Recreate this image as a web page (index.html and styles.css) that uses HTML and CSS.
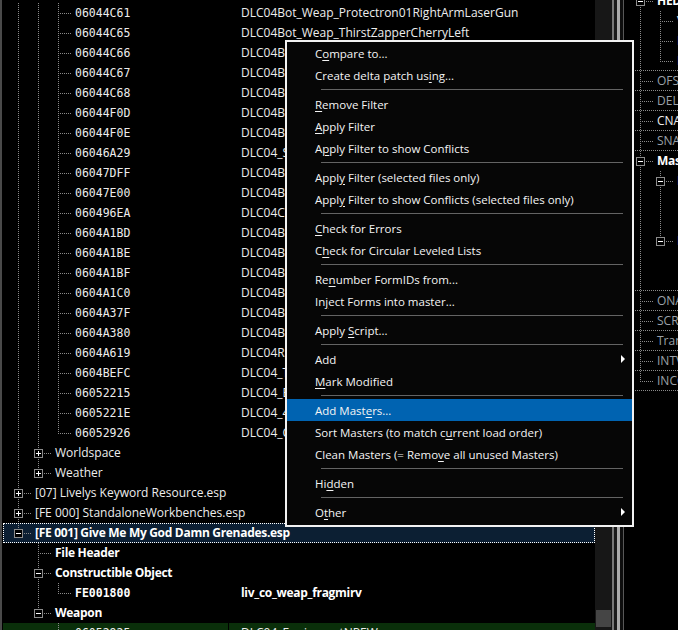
FILE: index.html
```html
<!DOCTYPE html>
<html>
<head>
<meta charset="utf-8">
<link rel="stylesheet" href="styles.css">
</head>
<body>
<div class="app">
  <div class="left">
    <div class="tree">
      <div class="row"><div class="tc"><span class="c v"></span><span class="c v"></span><span class="o mid"></span><span class="lbl mono">06044C61</span></div><div class="nc">DLC04Bot_Weap_Protectron01RightArmLaserGun</div></div>
      <div class="row"><div class="tc"><span class="c v"></span><span class="c v"></span><span class="o mid"></span><span class="lbl mono">06044C65</span></div><div class="nc">DLC04Bot_Weap_ThirstZapperCherryLeft</div></div>
      <div class="row"><div class="tc"><span class="c v"></span><span class="c v"></span><span class="o mid"></span><span class="lbl mono">06044C66</span></div><div class="nc">DLC04Bot_Weap_ThirstZapperCherryRight</div></div>
      <div class="row"><div class="tc"><span class="c v"></span><span class="c v"></span><span class="o mid"></span><span class="lbl mono">06044C67</span></div><div class="nc">DLC04Bot_Weap_ThirstZapperNukaLeft</div></div>
      <div class="row"><div class="tc"><span class="c v"></span><span class="c v"></span><span class="o mid"></span><span class="lbl mono">06044C68</span></div><div class="nc">DLC04Bot_Weap_ThirstZapperNukaRight</div></div>
      <div class="row"><div class="tc"><span class="c v"></span><span class="c v"></span><span class="o mid"></span><span class="lbl mono">06044F0D</span></div><div class="nc">DLC04Bot_Weap_Protectron01LeftArmLaserGun</div></div>
      <div class="row"><div class="tc"><span class="c v"></span><span class="c v"></span><span class="o mid"></span><span class="lbl mono">06044F0E</span></div><div class="nc">DLC04Bot_Weap_Protectron01LeftArmLaserGunB</div></div>
      <div class="row"><div class="tc"><span class="c v"></span><span class="c v"></span><span class="o mid"></span><span class="lbl mono">06046A29</span></div><div class="nc">DLC04_SpearJeweled</div></div>
      <div class="row"><div class="tc"><span class="c v"></span><span class="c v"></span><span class="o mid"></span><span class="lbl mono">06047DFF</span></div><div class="nc">DLC04Bot_Weap_AssaultronHead</div></div>
      <div class="row"><div class="tc"><span class="c v"></span><span class="c v"></span><span class="o mid"></span><span class="lbl mono">06047E00</span></div><div class="nc">DLC04Bot_Weap_AssaultronHeadLaser</div></div>
      <div class="row"><div class="tc"><span class="c v"></span><span class="c v"></span><span class="o mid"></span><span class="lbl mono">060496EA</span></div><div class="nc">DLC04Cowboy_Weap_Revolver</div></div>
      <div class="row"><div class="tc"><span class="c v"></span><span class="c v"></span><span class="o mid"></span><span class="lbl mono">0604A1BD</span></div><div class="nc">DLC04Bot_Weap_SentryMinigunLeft</div></div>
      <div class="row"><div class="tc"><span class="c v"></span><span class="c v"></span><span class="o mid"></span><span class="lbl mono">0604A1BE</span></div><div class="nc">DLC04Bot_Weap_SentryMinigunRight</div></div>
      <div class="row"><div class="tc"><span class="c v"></span><span class="c v"></span><span class="o mid"></span><span class="lbl mono">0604A1BF</span></div><div class="nc">DLC04Bot_Weap_SentryRocketLeft</div></div>
      <div class="row"><div class="tc"><span class="c v"></span><span class="c v"></span><span class="o mid"></span><span class="lbl mono">0604A1C0</span></div><div class="nc">DLC04Bot_Weap_SentryRocketRight</div></div>
      <div class="row"><div class="tc"><span class="c v"></span><span class="c v"></span><span class="o mid"></span><span class="lbl mono">0604A37F</span></div><div class="nc">DLC04Bot_Weap_EyebotLaser</div></div>
      <div class="row"><div class="tc"><span class="c v"></span><span class="c v"></span><span class="o mid"></span><span class="lbl mono">0604A380</span></div><div class="nc">DLC04Bot_Weap_EyebotLaserB</div></div>
      <div class="row"><div class="tc"><span class="c v"></span><span class="c v"></span><span class="o mid"></span><span class="lbl mono">0604A619</span></div><div class="nc">DLC04RaiderPipeRifle</div></div>
      <div class="row"><div class="tc"><span class="c v"></span><span class="c v"></span><span class="o mid"></span><span class="lbl mono">0604BEFC</span></div><div class="nc">DLC04_TeslaRifle</div></div>
      <div class="row"><div class="tc"><span class="c v"></span><span class="c v"></span><span class="o mid"></span><span class="lbl mono">06052215</span></div><div class="nc">DLC04_EnergyPistol</div></div>
      <div class="row"><div class="tc"><span class="c v"></span><span class="c v"></span><span class="o mid"></span><span class="lbl mono">0605221E</span></div><div class="nc">DLC04_44Pistol</div></div>
      <div class="row"><div class="tc"><span class="c v"></span><span class="c v"></span><span class="o last"></span><span class="lbl mono">06052926</span></div><div class="nc">DLC04_CombatRifle</div></div>
      <div class="row"><div class="tc"><span class="c v"></span><span class="o mid"><span class="bx plus"></span></span><span class="lbl">Worldspace</span></div></div>
      <div class="row"><div class="tc"><span class="c v"></span><span class="o last"><span class="bx plus"></span></span><span class="lbl">Weather</span></div></div>
      <div class="row"><div class="tc"><span class="o mid"><span class="bx plus"></span></span><span class="lbl">[07] Livelys Keyword Resource.esp</span></div></div>
      <div class="row"><div class="tc"><span class="o mid"><span class="bx plus"></span></span><span class="lbl">[FE 000] StandaloneWorkbenches.esp</span></div></div>
      <div class="row sel"><div class="tc"><span class="o last"><span class="bx minus"></span></span><span class="lbl b">[FE 001] Give Me My God Damn Grenades.esp</span></div></div>
      <div class="row"><div class="tc"><span class="c"></span><span class="o mid"></span><span class="lbl b">File Header</span></div></div>
      <div class="row"><div class="tc"><span class="c"></span><span class="o mid"><span class="bx minus"></span></span><span class="lbl b">Constructible Object</span></div></div>
      <div class="row"><div class="tc"><span class="c"></span><span class="c v"></span><span class="o last"></span><span class="lbl mono b">FE001800</span></div><div class="nc b">liv_co_weap_fragmirv</div></div>
      <div class="row"><div class="tc"><span class="c"></span><span class="o last"><span class="bx minus"></span></span><span class="lbl b">Weapon</span></div></div>
      <div class="row grn"><div class="tc"><span class="c"></span><span class="c"></span><span class="o mid"></span><span class="lbl mono">06052925</span></div><div class="nc">DLC04_EquipmentNPEW</div></div>
    </div>
  </div>
  <div class="vscroll"><div class="thumb"></div></div>
  <div class="split"></div>
  <div class="right">
    <div class="rtree">
      <div class="rrow"><span class="o first"><span class="bx minus"></span></span><span class="lbl b">HEDR - Header</span></div>
      <div class="rrow"><span class="c v"></span><span class="o mid"></span><span class="lbl">Version</span></div>
      <div class="rrow"><span class="c v"></span><span class="o mid"></span><span class="lbl blue">Number of Records</span></div>
      <div class="rrow gl"><span class="c v"></span><span class="o last"></span><span class="lbl blue">Next Object ID</span></div>
      <div class="rrow gl"><span class="o mid"></span><span class="lbl dim">OFST - Offsets</span></div>
      <div class="rrow gl"><span class="o mid"></span><span class="lbl dim">DELE - Deletions</span></div>
      <div class="rrow gl"><span class="o mid"></span><span class="lbl">CNAM - Author</span></div>
      <div class="rrow gl"><span class="o mid"></span><span class="lbl dim">SNAM - Description</span></div>
      <div class="rrow"><span class="o mid"><span class="bx minus"></span></span><span class="lbl b">Master Files</span></div>
      <div class="rrow"><span class="c v"></span><span class="o mid"><span class="bx minus"></span></span><span class="lbl blue">Master File</span></div>
      <div class="rrow"><span class="c v"></span><span class="c v"></span><span class="o mid"></span><span class="lbl">MAST - Filename</span></div>
      <div class="rrow"><span class="c v"></span><span class="c v"></span><span class="o last"></span><span class="lbl">DATA - Unused</span></div>
      <div class="rrow"><span class="c v"></span><span class="o last"><span class="bx minus"></span></span><span class="lbl blue">Master File</span></div>
      <div class="rrow"><span class="c v"></span><span class="c"></span><span class="o mid"></span><span class="lbl">MAST - Filename</span></div>
      <div class="rrow gl"><span class="c v"></span><span class="c"></span><span class="o last"></span><span class="lbl">DATA - Unused</span></div>
      <div class="rrow gl"><span class="o mid"></span><span class="lbl dim">ONAM - Overridden Forms</span></div>
      <div class="rrow gl"><span class="o mid"></span><span class="lbl dim">SCRN - Screenshot</span></div>
      <div class="rrow gl"><span class="o mid"></span><span class="lbl dim">Transient Types</span></div>
      <div class="rrow gl"><span class="o mid"></span><span class="lbl dim">INTV - Unknown</span></div>
      <div class="rrow gl"><span class="o last"></span><span class="lbl dim">INCC - Unknown</span></div>
    </div>
  </div>

  <div class="menu">
    <div class="mi"><span class="t">C<u>o</u>mpare to...</span></div>
    <div class="mi"><span class="t">Create delta patch us<u>i</u>ng...</span></div>
    <div class="sep"></div>
    <div class="mi"><span class="t"><u>R</u>emove Filter</span></div>
    <div class="mi"><span class="t"><u>A</u>pply Filter</span></div>
    <div class="mi"><span class="t">A<u>p</u>ply Filter to show Conflicts</span></div>
    <div class="sep"></div>
    <div class="mi"><span class="t">Appl<u>y</u> Filter (selected files only)</span></div>
    <div class="mi"><span class="t">Appl<u>y</u> Filter to show Conflicts (selected files only)</span></div>
    <div class="sep"></div>
    <div class="mi"><span class="t"><u>C</u>heck for Errors</span></div>
    <div class="mi"><span class="t">C<u>h</u>eck for Circular Leveled Lists</span></div>
    <div class="sep"></div>
    <div class="mi"><span class="t">Re<u>n</u>umber FormIDs from...</span></div>
    <div class="mi"><span class="t">In<u>j</u>ect Forms into master...</span></div>
    <div class="sep"></div>
    <div class="mi"><span class="t">Apply <u>S</u>cript...</span></div>
    <div class="sep"></div>
    <div class="mi"><span class="t">Add</span><span class="arrow"></span></div>
    <div class="mi"><span class="t"><u>M</u>ark Modified</span></div>
    <div class="sep"></div>
    <div class="mi hl"><span class="t">Add Mast<u>e</u>rs...</span></div>
    <div class="mi"><span class="t">Sort Masters (to match c<u>u</u>rrent load order)</span></div>
    <div class="mi"><span class="t">Clean Masters (= Remo<u>v</u>e all unused Masters)</span></div>
    <div class="sep"></div>
    <div class="mi"><span class="t">Hi<u>d</u>den</span></div>
    <div class="sep"></div>
    <div class="mi"><span class="t">O<u>t</u>her</span><span class="arrow"></span></div>
  </div>
</div>
</body>
</html>
```

FILE: styles.css
```css
* { box-sizing: border-box; }
html, body { margin: 0; padding: 0; background: #000; overflow: hidden; }
body {
  font-family: "Open Sans", "Noto Sans", sans-serif;
  font-size: 12px;
  color: #ededed;
}

.app {
  position: relative;
  display: flex;
  width: 678px;
  height: 630px;
  overflow: hidden;
  background: #000;
}

/* ---------- left tree ---------- */
.left {
  width: 595px;
  flex: none;
  border-left: 2px solid #4a4a4a;
  overflow: hidden;
}
.tree { padding-top: 3px; }

.row {
  display: flex;
  height: 20px;
  line-height: 20px;
  white-space: nowrap;
}
.tc {
  display: flex;
  flex: none;
  width: 226px;
  height: 20px;
  padding-left: 6px;
}
.nc {
  flex: 1;
  padding-left: 13px;
  white-space: nowrap;
}
.lbl { padding-left: 4px; white-space: nowrap; }
.mono {
  font-family: "DejaVu Sans Mono", "Liberation Mono", monospace;
  font-size: 11.5px;
}
.b { font-weight: 700; color: #fff; letter-spacing: -0.3px; }
.mono.b { letter-spacing: 0; }

/* tree guide cells */
.c { display: block; flex: none; width: 20px; height: 20px; }
.c.v {
  background: repeating-linear-gradient(to bottom, #8a8a8a 0 1px, transparent 1px 2px) 10px 0 / 1px 20px no-repeat;
}
.o {
  display: flex;
  align-items: flex-start;
  flex: none;
  width: 23px;
  height: 20px;
}
.o.mid {
  background:
    repeating-linear-gradient(to bottom, #8a8a8a 0 1px, transparent 1px 2px) 10px 0 / 1px 20px no-repeat,
    repeating-linear-gradient(to right, #8a8a8a 0 1px, transparent 1px 2px) 12px 10px / 11px 1px no-repeat;
}
.o.last {
  background:
    repeating-linear-gradient(to bottom, #8a8a8a 0 1px, transparent 1px 2px) 10px 0 / 1px 11px no-repeat,
    repeating-linear-gradient(to right, #8a8a8a 0 1px, transparent 1px 2px) 12px 10px / 11px 1px no-repeat;
}
.o.first {
  background:
    repeating-linear-gradient(to bottom, #8a8a8a 0 1px, transparent 1px 2px) 10px 10px / 1px 10px no-repeat,
    repeating-linear-gradient(to right, #8a8a8a 0 1px, transparent 1px 2px) 12px 10px / 11px 1px no-repeat;
}
.bx {
  display: block;
  width: 9px;
  height: 9px;
  margin: 6px 0 0 6px;
  border: 1px solid #8c8c8c;
  background-color: #000;
}
.bx.minus {
  background: linear-gradient(#fff, #fff) 1px 3px / 5px 1px no-repeat, #000;
}
.bx.plus {
  background:
    linear-gradient(#fff, #fff) 1px 3px / 5px 1px no-repeat,
    linear-gradient(#fff, #fff) 3px 1px / 1px 5px no-repeat,
    #000;
}

/* selected row */
.row.sel {
  margin-left: 1px;
  background: #0c1f33;
  outline: 1px dotted #fff;
  outline-offset: -1px;
}
.row.sel .tc { padding-left: 5px; width: 225px; }

/* green row */
.row.grn { margin-left: 1px; }
.row.grn .tc { padding-left: 5px; width: 225px; background-color: #0a2f0a; }
.row.grn .nc { margin-left: 1px; padding-left: 12px; background: #0a2f0a; }

/* ---------- scrollbar & splitter ---------- */
.vscroll {
  width: 17px;
  flex: none;
  background: #171717;
  display: flex;
  flex-direction: column;
  justify-content: flex-end;
  padding: 0 1px 3px 1px;
}
.thumb { height: 17px; background: #454545; }
.split {
  width: 13px;
  flex: none;
  background: linear-gradient(to right,
    #787878 0 2px, #1a1a1a 2px 5px, #ababab 5px 8px,
    #0e0e0e 8px 11px, #585858 11px 12px, #000 12px 13px);
}

/* ---------- right tree ---------- */
.right { flex: 1; overflow: hidden; }
.rtree { margin-top: -9px; }
.rrow {
  display: flex;
  height: 20px;
  line-height: 20px;
  padding-left: 5px;
  white-space: nowrap;
}
.rrow.gl {
  background: repeating-linear-gradient(to right, #8a8a8a 0 1px, transparent 1px 2px) 0 19px / 100% 1px no-repeat;
}
.dim { color: #9aa0a8; }
.blue { color: #5a78d8; }

/* ---------- context menu ---------- */
.menu {
  position: absolute;
  left: 285px;
  top: 40px;
  width: 349px;
  border: 2px solid #f2f2f2;
  background: #060606;
  padding: 0 0 2px;
  color: #f4f4f4;
  font-size: 11.5px;
}
.mi {
  display: flex;
  align-items: center;
  height: 22px;
  padding-left: 28px;
  white-space: nowrap;
}
.t { white-space: pre; }
.mi u { text-decoration-thickness: 1px; text-underline-offset: 2px; }
.mi.hl { background: #0063b1; }
.sep {
  height: 7px;
  display: flex;
  align-items: center;
  padding: 0 9px 0 34px;
}
.sep::before {
  content: "";
  display: block;
  width: 100%;
  height: 1px;
  background: #636363;
}
.arrow {
  margin-left: auto;
  margin-right: 7px;
  width: 0;
  height: 0;
  border-left: 4px solid #fff;
  border-top: 4px solid transparent;
  border-bottom: 4px solid transparent;
}
```
